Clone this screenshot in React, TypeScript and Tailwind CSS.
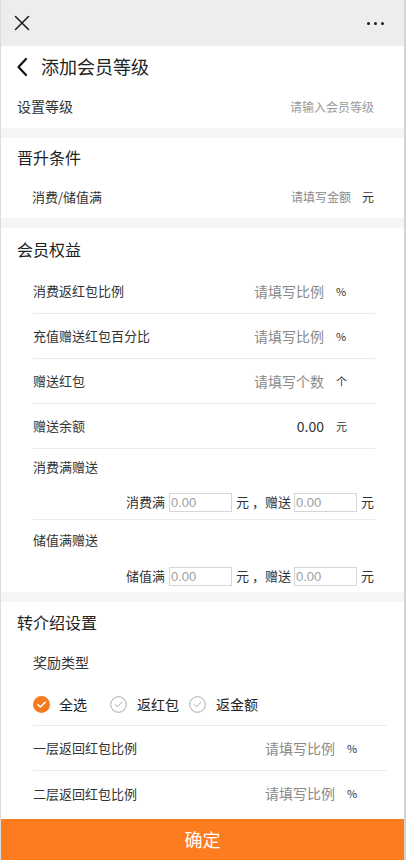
import React from 'react';

const font = { fontFamily: '"Noto Sans CJK SC", "Noto Sans", sans-serif' };

function Band() {
  return <div className="h-[10px] bg-[#f5f5f5]" />;
}

function CheckCircle({ on }: { on: boolean }) {
  return on ? (
    <svg width="17" height="17" viewBox="0 0 17 17">
      <circle cx="8.5" cy="8.5" r="8.5" fill="#f47b20" />
      <path d="M4.8 8.7 L7.4 11 L12.2 6.2" fill="none" stroke="#fff" strokeWidth="1.6" strokeLinecap="round" strokeLinejoin="round" />
    </svg>
  ) : (
    <svg width="17" height="17" viewBox="0 0 17 17">
      <circle cx="8.5" cy="8.5" r="7.8" fill="none" stroke="#a8a8a8" strokeWidth="1" />
      <path d="M5.2 8.7 L7.5 10.8 L11.8 6.4" fill="none" stroke="#a8a8a8" strokeWidth="1" strokeLinecap="round" strokeLinejoin="round" />
    </svg>
  );
}

function BenefitRow({ label, value, unit, dark }: { label: string; value: string; unit: string; dark?: boolean }) {
  return (
    <div className="h-[45px] flex items-center border-b border-[#ececec]">
      <span className="flex-1 text-[13px] text-[#333]">{label}</span>
      <span className={dark ? 'text-[14px] text-[#333]' : 'text-[14px] text-[#8a8a8a]'}>{value}</span>
      <span className="w-[51px] pl-[12px] text-[11px] text-[#333]">{unit}</span>
    </div>
  );
}

function Box() {
  return (
    <div className="w-[63px] h-[19px] border border-[#d6d6d6] bg-white text-[13px] leading-[17px] text-[#a0a0a0] px-[1px] font-['Liberation_Sans']">
      0.00
    </div>
  );
}

function FullGive({ label, prefix, last }: { label: string; prefix: string; last?: boolean }) {
  return (
    <div className={last ? '' : 'border-b border-[#ececec]'}>
      <div className={last ? 'h-[40px] flex items-center text-[13px] text-[#333]' : 'h-[36px] flex items-center text-[13px] text-[#333]'}>{label}</div>
      <div className={last ? 'h-[32px] flex items-center justify-end text-[13px] text-[#333]' : 'h-[34px] flex items-center justify-end text-[13px] text-[#333]'}>
        <span className="mr-[4px]">{prefix}</span>
        <Box />
        <span className="ml-[4px]">元</span>
        <span className="ml-[3px] w-[13px]">，</span>
        <span className="mr-[3px]">赠送</span>
        <Box />
        <span className="ml-[4px] mr-[1px]">元</span>
      </div>
    </div>
  );
}

export default function App() {
  return (
    <div style={font} className="h-[860px] w-full flex flex-col bg-white overflow-hidden border-l border-[#dcdcdc] border-r-2 border-r-[#d4d4d4]">
      {/* top bar */}
      <div className="h-[46px] shrink-0 bg-[#ededed] flex items-center justify-between pl-[13px] pr-[20px]">
        <svg width="16" height="16" viewBox="0 0 16 16">
          <path d="M1.5 1.5 L14.5 14.5 M14.5 1.5 L1.5 14.5" stroke="#1a1a1a" strokeWidth="1.5" strokeLinecap="round" />
        </svg>
        <div className="flex gap-[4px]">
          <span className="w-[3px] h-[3px] rounded-full bg-[#1a1a1a]" />
          <span className="w-[3px] h-[3px] rounded-full bg-[#1a1a1a]" />
          <span className="w-[3px] h-[3px] rounded-full bg-[#1a1a1a]" />
        </div>
      </div>

      <div className="flex-1 overflow-hidden">
        {/* header */}
        <div className="h-[41px] flex items-center pl-[15px]">
          <svg width="12" height="20" viewBox="0 0 12 20">
            <path d="M10 2 L2.5 10 L10 18" fill="none" stroke="#111" strokeWidth="2.2" strokeLinecap="round" strokeLinejoin="round" />
          </svg>
          <span className="ml-[13px] text-[18px] text-[#222]">添加会员等级</span>
        </div>

        <div className="h-[41px] flex items-center justify-between pl-[16px] pr-[30px] pb-[2px]">
          <span className="text-[14px] text-[#333]">设置等级</span>
          <span className="text-[12px] text-[#9a9a9a]">请输入会员等级</span>
        </div>
        <Band />

        {/* 晋升条件 */}
        <div className="h-[38px] flex items-center pl-[16px] text-[16px] text-[#222]">晋升条件</div>
        <div className="h-[42px] flex items-center pl-[31px] pr-[30px]">
          <span className="flex-1 text-[13px] text-[#333]">消费/储值满</span>
          <span className="text-[12px] text-[#8a8a8a]">请填写金额</span>
          <span className="ml-[11px] text-[12px] text-[#333]">元</span>
        </div>
        <Band />

        {/* 会员权益 */}
        <div className="h-[41px] flex items-center pl-[16px] text-[16px] text-[#222]">会员权益</div>
        <div className="ml-[32px] mr-[29px]">
          <BenefitRow label="消费返红包比例" value="请填写比例" unit="%" />
          <BenefitRow label="充值赠送红包百分比" value="请填写比例" unit="%" />
          <BenefitRow label="赠送红包" value="请填写个数" unit="个" />
          <BenefitRow label="赠送余额" value="0.00" unit="元" dark />
          <FullGive label="消费满赠送" prefix="消费满" />
          <FullGive label="储值满赠送" prefix="储值满" last />
        </div>
        <Band />

        {/* 转介绍设置 */}
        <div className="h-[39px] flex items-center pl-[16px] text-[16px] text-[#222]">转介绍设置</div>
        <div className="ml-[32px] mr-[17px]">
          <div className="h-[42px] flex items-center text-[14px] text-[#333]">奖励类型</div>
          <div className="h-[43px] flex items-center border-b border-[#ececec] text-[14px] text-[#222]">
            <CheckCircle on />
            <span className="ml-[9px] mr-[23px]">全选</span>
            <CheckCircle on={false} />
            <span className="ml-[10px] mr-[10px]">返红包</span>
            <CheckCircle on={false} />
            <span className="ml-[10px]">返金额</span>
          </div>
          <div className="h-[45px] flex items-center border-b border-[#ececec]">
            <span className="flex-1 text-[13px] text-[#333]">一层返回红包比例</span>
            <span className="text-[14px] text-[#8a8a8a]">请填写比例</span>
            <span className="w-[52px] pl-[12px] text-[11px] text-[#333]">%</span>
          </div>
          <div className="h-[45px] flex items-center">
            <span className="flex-1 text-[13px] text-[#333]">二层返回红包比例</span>
            <span className="text-[14px] text-[#8a8a8a]">请填写比例</span>
            <span className="w-[52px] pl-[12px] text-[11px] text-[#333]">%</span>
          </div>
        </div>
      </div>

      <button className="h-[41px] shrink-0 w-full bg-[#fe7c20] text-white text-[18px] flex items-center justify-center">确定</button>
    </div>
  );
}
